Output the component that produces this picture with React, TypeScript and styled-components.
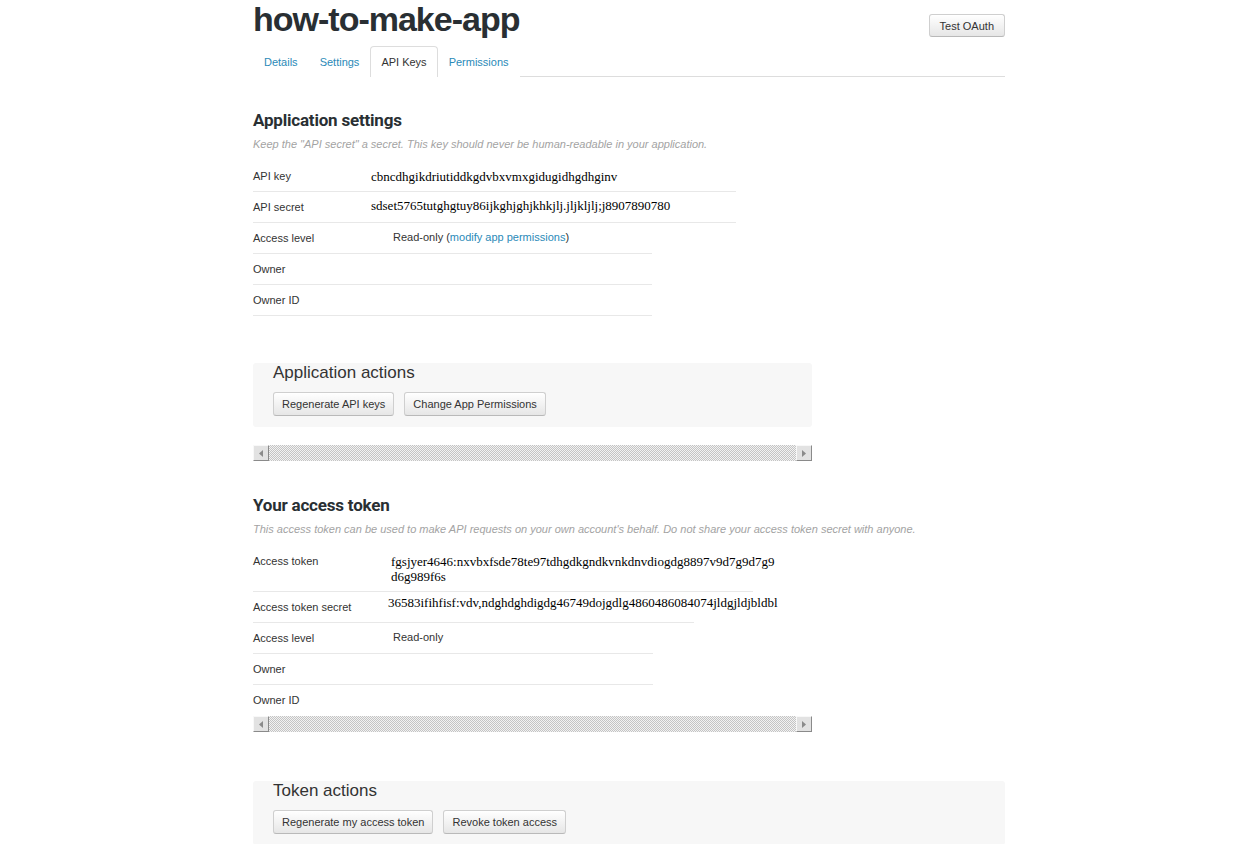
import React from "react";
import styled, { createGlobalStyle } from "styled-components";

const Global = createGlobalStyle`
  html, body { margin: 0; padding: 0; background: #fff; }
  body { font-family: "Liberation Sans", Arial, sans-serif; color: #333; font-size: 11px; }
`;

const Page = styled.div`
  width: 752px;
  margin-left: 253px;
`;

const Header = styled.header`
  display: flex;
  justify-content: space-between;
  align-items: flex-start;
`;

const Title = styled.h1`
  margin: 0;
  font-family: "Liberation Sans", Arial, sans-serif;
  font-size: 34px;
  line-height: 38px;
  font-weight: 700;
  letter-spacing: -1px;
  color: #292f33;
`;

const Button = styled.button`
  box-sizing: border-box;
  height: 24px;
  padding: 0 8px;
  font-family: "Liberation Sans", Arial, sans-serif;
  font-size: 11px;
  color: #333;
  background: linear-gradient(#ffffff, #e6e6e6);
  border: 1px solid #cfcfcf;
  border-bottom-color: #b9b9b9;
  border-radius: 3px;
  box-shadow: inset 0 1px 0 rgba(255, 255, 255, 0.9);
  white-space: nowrap;
  cursor: pointer;
`;

const HeaderButton = styled(Button)`
  margin-top: 14px;
  height: 23px;
  padding: 0 10px;
`;

const Tabs = styled.nav`
  display: flex;
  margin-top: 8px;
  height: 30px;
  border-bottom: 1px solid #ddd;
`;

const Tab = styled.a<{ $active?: boolean }>`
  box-sizing: border-box;
  display: flex;
  align-items: center;
  height: 31px;
  padding: 0 10px 1px;
  font-size: 11px;
  text-decoration: none;
  color: ${(p) => (p.$active ? "#333" : "#2a8ab8")};
  border: 1px solid ${(p) => (p.$active ? "#ddd" : "transparent")};
  border-bottom: none;
  border-radius: 4px 4px 0 0;
  background: #fff;
`;

const SectionTitle = styled.h2<{ $mt: number }>`
  margin: ${(p) => p.$mt}px 0 0;
  font-family: "Liberation Sans Narrow", Roboto, "Liberation Sans", sans-serif;
  font-size: 17px;
  line-height: 22px;
  font-weight: 700;
  letter-spacing: -0.2px;
  color: #292f33;
`;

const Subtitle = styled.p`
  margin: 5px 0 0;
  font-size: 11px;
  line-height: 16px;
  font-style: italic;
  color: #a3a3a3;
`;

const Table = styled.div`
  display: flex;
  flex-direction: column;
  margin-top: 9px;
`;

const Row = styled.div<{ $width: number; $last?: boolean }>`
  display: flex;
  align-items: flex-start;
  width: ${(p) => p.$width}px;
  padding: 8px 0 7px;
  line-height: 15px;
  border-bottom: 1px solid ${(p) => (p.$last ? "transparent" : "#e8e8e8")};
`;

const Label = styled.div<{ $w: number }>`
  flex: none;
  width: ${(p) => p.$w}px;
  font-size: 11px;
  color: #333;
`;

const Value = styled.div<{ $raise?: number }>`
  font-family: "Liberation Serif", "Times New Roman", serif;
  font-size: 13px;
  line-height: 15px;
  color: #000;
  white-space: nowrap;
  margin-top: ${(p) => -(p.$raise || 0)}px;
`;

const PlainValue = styled.div`
  font-size: 11px;
  color: #333;
  margin-top: -1px;
`;

const Link = styled.a`
  color: #2a8ab8;
  text-decoration: none;
`;

const ActionsBox = styled.section<{ $width: number; $mt: number }>`
  box-sizing: border-box;
  width: ${(p) => p.$width}px;
  margin-top: ${(p) => p.$mt}px;
  padding: 0 20px 11px;
  background: #f7f7f7;
  border-radius: 3px;
`;

const ActionsTitle = styled.h3`
  margin: 0;
  padding-top: 1px;
  font-size: 17px;
  line-height: 18px;
  font-weight: 400;
  color: #333;
`;

const ButtonRow = styled.div`
  display: flex;
  gap: 10px;
  margin-top: 10px;
`;

const ScrollBar = styled.div<{ $mt: number }>`
  display: flex;
  justify-content: space-between;
  width: 559px;
  height: 16px;
  margin-top: ${(p) => p.$mt}px;
  background: repeating-conic-gradient(#c4c4c4 0 25%, #f2f2f2 0 50%) 0 0 / 2px 2px;
`;

const ScrollButton = styled.div`
  box-sizing: border-box;
  width: 16px;
  height: 16px;
  display: flex;
  align-items: center;
  justify-content: center;
  background: #e2e2e2;
  border: 1px solid;
  border-color: #f8f8f8 #8a8a8a #8a8a8a #f8f8f8;
`;

const Arrow = ({ dir }: { dir: "left" | "right" }) => (
  <svg width="4" height="7" viewBox="0 0 4 7">
    <path d={dir === "left" ? "M4 0 L0 3.5 L4 7 Z" : "M0 0 L4 3.5 L0 7 Z"} fill="#8a8a8a" />
  </svg>
);

const Scroll = ({ mt }: { mt: number }) => (
  <ScrollBar $mt={mt}>
    <ScrollButton>
      <Arrow dir="left" />
    </ScrollButton>
    <ScrollButton>
      <Arrow dir="right" />
    </ScrollButton>
  </ScrollBar>
);

export default function App() {
  return (
    <>
      <Global />
      <Page>
        <Header>
          <Title>how-to-make-app</Title>
          <HeaderButton>Test OAuth</HeaderButton>
        </Header>
        <Tabs>
          <Tab href="#">Details</Tab>
          <Tab href="#">Settings</Tab>
          <Tab href="#" $active>
            API Keys
          </Tab>
          <Tab href="#">Permissions</Tab>
        </Tabs>

        <SectionTitle $mt={32}>Application settings</SectionTitle>
        <Subtitle>
          Keep the "API secret" a secret. This key should never be human-readable in your application.
        </Subtitle>
        <Table>
          <Row $width={483}>
            <Label $w={118}>API key</Label>
            <Value>cbncdhgikdriutiddkgdvbxvmxgidugidhgdhginv</Value>
          </Row>
          <Row $width={483}>
            <Label $w={118}>API secret</Label>
            <Value $raise={2}>sdset5765tutghgtuy86ijkghjghjkhkjlj.jljkljlj;j8907890780</Value>
          </Row>
          <Row $width={399}>
            <Label $w={140}>Access level</Label>
            <PlainValue>
              Read-only (<Link href="#">modify app permissions</Link>)
            </PlainValue>
          </Row>
          <Row $width={399}>
            <Label $w={140}>Owner</Label>
          </Row>
          <Row $width={399}>
            <Label $w={140}>Owner ID</Label>
          </Row>
        </Table>

        <ActionsBox $width={559} $mt={47}>
          <ActionsTitle>Application actions</ActionsTitle>
          <ButtonRow>
            <Button>Regenerate API keys</Button>
            <Button>Change App Permissions</Button>
          </ButtonRow>
        </ActionsBox>
        <Scroll mt={18} />

        <SectionTitle $mt={33}>Your access token</SectionTitle>
        <Subtitle>
          This access token can be used to make API requests on your own account's behalf. Do not share your
          access token secret with anyone.
        </Subtitle>
        <Table>
          <Row $width={500}>
            <Label $w={138}>Access token</Label>
            <Value>
              fgsjyer4646:nxvbxfsde78te97tdhgdkgndkvnkdnvdiogdg8897v9d7g9d7g9
              <br />
              d6g989f6s
            </Value>
          </Row>
          <Row $width={441}>
            <Label $w={135}>Access token secret</Label>
            <Value $raise={5}>36583ifihfisf:vdv,ndghdghdigdg46749dojgdlg4860486084074jldgjldjbldbl</Value>
          </Row>
          <Row $width={400}>
            <Label $w={140}>Access level</Label>
            <PlainValue>Read-only</PlainValue>
          </Row>
          <Row $width={400}>
            <Label $w={140}>Owner</Label>
          </Row>
          <Row $width={400} $last>
            <Label $w={140}>Owner ID</Label>
          </Row>
        </Table>
        <Scroll mt={0} />

        <ActionsBox $width={752} $mt={49}>
          <ActionsTitle>Token actions</ActionsTitle>
          <ButtonRow>
            <Button>Regenerate my access token</Button>
            <Button>Revoke token access</Button>
          </ButtonRow>
        </ActionsBox>
      </Page>
    </>
  );
}
